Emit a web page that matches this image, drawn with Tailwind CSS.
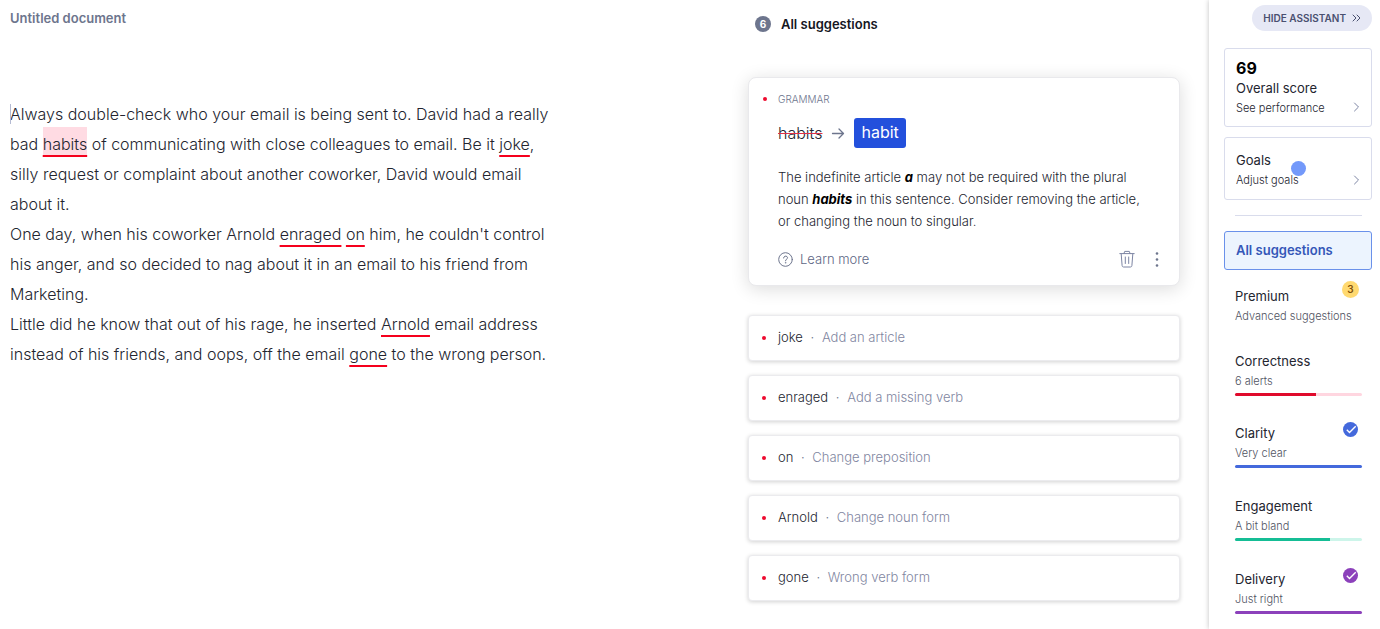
<!DOCTYPE html>
<html lang="en">
<head>
<meta charset="utf-8">
<meta name="viewport" content="width=device-width, initial-scale=1">
<title>Untitled document</title>
<script src="https://cdn.jsdelivr.net/npm/@tailwindcss/browser@4"></script>
</head>
<body class="bg-white font-['Inter',sans-serif] text-[#23252f]">
<div class="flex min-h-screen overflow-hidden">

  <!-- Editor -->
  <main class="min-w-0 flex-1 pl-[10px] pt-2">
    <h1 class="text-[13px] leading-5 font-semibold text-[#6d758d]">Untitled document</h1>
    <div contenteditable="true" role="textbox" aria-multiline="true" aria-label="Document text" spellcheck="false" class="relative mt-[71px] max-w-[550px] text-base leading-[30px] font-light outline-none">
      <span class="absolute top-[5px] left-0 h-5 w-px bg-[#b4bad2]"></span>
      <p>Always double-check who your email is being sent to. David had a really bad <span class="bg-[#ffdbe3] pt-[7px] pb-[3px] underline decoration-[#f5001d] decoration-2 underline-offset-[5px] [text-decoration-skip-ink:none]">habits</span> of communicating with close colleagues to email. Be it <span class="underline decoration-[#f5001d] decoration-2 underline-offset-[5px] [text-decoration-skip-ink:none]">joke</span>, silly request or complaint about another coworker, David would email about it.</p>
      <p>One day, when his coworker Arnold <span class="underline decoration-[#f5001d] decoration-2 underline-offset-[5px] [text-decoration-skip-ink:none]">enraged</span> <span class="underline decoration-[#f5001d] decoration-2 underline-offset-[5px] [text-decoration-skip-ink:none]">on</span> him, he couldn't control his anger, and so decided to nag about it in an email to his friend from Marketing.</p>
      <p>Little did he know that out of his rage, he inserted <span class="underline decoration-[#f5001d] decoration-2 underline-offset-[5px] [text-decoration-skip-ink:none]">Arnold</span> email address instead of his friends, and oops, off the email <span class="underline decoration-[#f5001d] decoration-2 underline-offset-[5px] [text-decoration-skip-ink:none]">gone</span> to the wrong person.</p>
    </div>
  </main>

  <!-- Suggestions -->
  <section aria-label="Suggestions" class="w-[432px] shrink-0 pt-[14px]">
    <h2 class="flex items-center gap-[10px] pl-[7px] text-[13px] leading-5 font-semibold text-[#15171f]">
      <span class="flex size-4 items-center justify-center rounded-full bg-[#6d758d] text-[10px] leading-4 font-bold text-white">6</span>
      All suggestions
    </h2>

    <article class="mt-[43px] rounded-lg border border-[#e9e9ec] bg-white pt-[15px] pr-[14px] pb-4 pl-[29px] shadow-[0_3px_18px_rgba(0,0,0,0.14)]">
      <div class="relative text-[10px] leading-3 font-light text-[#6d758d]">
        <span class="absolute top-1 -left-[15px] size-1 rounded-full bg-[#ee0a2e]"></span>
        GRAMMAR
      </div>
      <div class="mt-[13px] flex items-center gap-[9px]">
        <del class="text-base leading-[30px] font-light decoration-[#e0304a] decoration-1">habits</del>
        <svg class="size-[14px]" viewBox="0 0 14 14" fill="none" stroke="#6d758d" stroke-width="1.3" stroke-linecap="round" stroke-linejoin="round" aria-hidden="true"><path d="M1.500 7.500h11M8 3l4.500 4.500L8 12"/></svg>
        <button type="button" class="h-[30px] rounded-[3px] bg-[#2350dc] px-[7px] pb-[2px] text-base leading-6 text-white">habit</button>
      </div>
      <p class="mt-[18px] pr-4 text-[13px] leading-[22px] font-light">The indefinite article <b class="font-bold text-black italic">a</b> may not be required with the plural noun <b class="font-bold text-black italic">habits</b> in this sentence. Consider removing the article, or changing the noun to singular.</p>
      <div class="mt-[17px] flex items-center">
        <a href="#" class="flex items-center gap-[7px] text-[13px] leading-5 font-light text-[#5d6684]">
          <svg class="size-[15px]" viewBox="0 0 15 15" fill="none" stroke="#6d758d" stroke-linecap="round" aria-hidden="true"><circle cx="7.500" cy="7.500" r="6.800"/><path d="M5.600 6c0-2.600 3.900-2.500 3.900-.2 0 1.400-2 1.400-2 3"/><circle cx="7.500" cy="10.800" r=".4" fill="#6d758d" stroke-width=".5"/></svg>
          Learn more
        </a>
        <button type="button" aria-label="Dismiss" class="ml-auto">
          <svg class="h-[18px] w-4" viewBox="0 0 16 18" fill="none" stroke="#7c84a3" stroke-linecap="round" stroke-linejoin="round" aria-hidden="true"><path d="M.8 3.600h14.400M5 3.400l.7-2h4.600l.7 2M2.200 4l.9 11.500c.1 1 .6 1.500 1.500 1.500h6.800c.9 0 1.400-.5 1.500-1.500L13.800 4M6.300 7v6.500M9.700 7v6.500"/></svg>
        </button>
        <button type="button" aria-label="More options" class="ml-[14px]">
          <svg class="h-[18px] w-4" viewBox="0 0 16 18" fill="#6d758d" aria-hidden="true"><circle cx="8" cy="3.500" r="1.300"/><circle cx="8" cy="9.500" r="1.300"/><circle cx="8" cy="15.500" r="1.300"/></svg>
        </button>
      </div>
    </article>

    <div class="mt-[29px] flex flex-col gap-[14px] pb-4 text-[13px]">
      <button type="button" class="flex h-[46px] items-center rounded border border-[#ebebee] bg-white pl-[13px] text-left font-light shadow-[0_1px_4px_rgba(0,0,0,0.18)]"><span class="mr-3 size-1 rounded-full bg-[#ee0a2e]"></span>joke<span class="w-[19px] text-center text-[#6d758d]">·</span><span class="text-[#7f869f]">Add an article</span></button>
      <button type="button" class="flex h-[46px] items-center rounded border border-[#ebebee] bg-white pl-[13px] text-left font-light shadow-[0_1px_4px_rgba(0,0,0,0.18)]"><span class="mr-3 size-1 rounded-full bg-[#ee0a2e]"></span>enraged<span class="w-[19px] text-center text-[#6d758d]">·</span><span class="text-[#7f869f]">Add a missing verb</span></button>
      <button type="button" class="flex h-[46px] items-center rounded border border-[#ebebee] bg-white pl-[13px] text-left font-light shadow-[0_1px_4px_rgba(0,0,0,0.18)]"><span class="mr-3 size-1 rounded-full bg-[#ee0a2e]"></span>on<span class="w-[19px] text-center text-[#6d758d]">·</span><span class="text-[#7f869f]">Change preposition</span></button>
      <button type="button" class="flex h-[46px] items-center rounded border border-[#ebebee] bg-white pl-[13px] text-left font-light shadow-[0_1px_4px_rgba(0,0,0,0.18)]"><span class="mr-3 size-1 rounded-full bg-[#ee0a2e]"></span>Arnold<span class="w-[19px] text-center text-[#6d758d]">·</span><span class="text-[#7f869f]">Change noun form</span></button>
      <button type="button" class="flex h-[46px] items-center rounded border border-[#ebebee] bg-white pl-[13px] text-left font-light shadow-[0_1px_4px_rgba(0,0,0,0.18)]"><span class="mr-3 size-1 rounded-full bg-[#ee0a2e]"></span>gone<span class="w-[19px] text-center text-[#6d758d]">·</span><span class="text-[#7f869f]">Wrong verb form</span></button>
    </div>
  </section>

  <!-- Assistant -->
  <aside aria-label="Assistant" class="ml-[29px] flex w-[171px] shrink-0 flex-col bg-white pt-[5px] pr-2 pl-[15px] shadow-[0_0_5px_rgba(0,0,0,0.25)]">
    <button type="button" class="flex h-[26px] items-center gap-[6px] self-end rounded-full bg-[#e6e8f5] px-[11px] text-[10px] font-semibold text-[#4a5070]">HIDE ASSISTANT
      <svg class="h-2 w-[9px]" viewBox="0 0 9 8" fill="none" stroke="#4a5070" stroke-linecap="round" stroke-linejoin="round" aria-hidden="true"><path d="M1 1l3 3-3 3M5 1l3 3-3 3"/></svg>
    </button>

    <button type="button" class="mt-[17px] flex h-[79px] items-end justify-between rounded-[3px] border border-[#d9dcec] pr-[11px] pb-2 pl-[11px] text-left">
      <span class="flex flex-col">
        <span class="text-base leading-5 font-bold text-black">69</span>
        <span class="text-[13px] leading-5">Overall score</span>
        <span class="text-[11px] leading-5 font-light">See performance</span>
      </span>
      <svg class="mb-[6px] h-[10px] w-[7px]" viewBox="0 0 7 10" fill="none" stroke="#7c84a3" stroke-linecap="round" stroke-linejoin="round" aria-hidden="true"><path d="M1.500 1L5.500 5l-4 4"/></svg>
    </button>

    <button type="button" class="relative mt-[10px] flex h-[63px] items-end justify-between rounded-[3px] border border-[#d9dcec] pr-[11px] pb-[9px] pl-[11px] text-left">
      <span class="flex flex-col">
        <span class="text-[13px] leading-5">Goals</span>
        <span class="text-[11px] leading-5 font-light">Adjust goals</span>
      </span>
      <svg class="mb-[5px] h-[10px] w-[7px]" viewBox="0 0 7 10" fill="none" stroke="#7c84a3" stroke-linecap="round" stroke-linejoin="round" aria-hidden="true"><path d="M1.500 1L5.500 5l-4 4"/></svg>
      <span class="absolute top-[23px] left-[66px] size-[15px] rounded-full bg-[#7399fa]"></span>
    </button>

    <hr class="mr-[10px] ml-[11px] mt-[15px] border-[#d9dcec]">

    <button type="button" class="mt-[15px] h-[39px] rounded-[3px] border border-[#6a91ea] bg-[#ecf4fe] pl-[11px] text-left text-[13px] font-semibold text-[#3457b8]">All suggestions</button>

    <div class="mt-4 flex flex-col pr-[10px] pl-[11px]">
      <button type="button" class="relative flex h-[65px] flex-col text-left">
        <span class="text-[13px] leading-5">Premium</span>
        <span class="text-[11px] leading-5 font-light text-[#50535f]">Advanced suggestions</span>
        <span class="absolute -top-[5px] right-[3px] size-[17px] rounded-full bg-[#ffd970] text-center text-[10px] leading-[17px] font-semibold text-[#80500a]">3</span>
      </button>
      <button type="button" class="flex h-[72px] flex-col text-left">
        <span class="text-[13px] leading-5">Correctness</span>
        <span class="text-[11px] leading-5 font-light text-[#50535f]">6 alerts</span>
        <span class="mt-[2px] h-[3px] w-full rounded-full bg-[#ffd6e0]"><span class="block h-full rounded-l-full bg-[#e00a2c]" style="width:64%"></span></span>
      </button>
      <button type="button" class="relative flex h-[73px] flex-col text-left">
        <span class="text-[13px] leading-5">Clarity</span>
        <span class="text-[11px] leading-5 font-light text-[#50535f]">Very clear</span>
        <span class="mt-[2px] h-[3px] w-full rounded-full bg-[#4469dc]"></span>
        <svg class="absolute -top-[1px] right-1 size-[15px]" viewBox="0 0 15 15" fill="none" aria-hidden="true"><circle cx="7.500" cy="7.500" r="7.500" fill="#4469dc"/><path d="M3.800 7.800l2.700 2.600 6.200-6.200" stroke="#fff" stroke-width="1.400"/></svg>
      </button>
      <button type="button" class="flex h-[73px] flex-col text-left">
        <span class="text-[13px] leading-5">Engagement</span>
        <span class="text-[11px] leading-5 font-light text-[#50535f]">A bit bland</span>
        <span class="mt-[2px] h-[3px] w-full rounded-full bg-[#cdf5ea]"><span class="block h-full rounded-l-full bg-[#15bd95]" style="width:75%"></span></span>
      </button>
      <button type="button" class="relative flex flex-col text-left">
        <span class="text-[13px] leading-5">Delivery</span>
        <span class="text-[11px] leading-5 font-light text-[#50535f]">Just right</span>
        <span class="mt-[2px] h-[3px] w-full rounded-full bg-[#8c41bb]"></span>
        <svg class="absolute -top-[1px] right-1 size-[15px]" viewBox="0 0 15 15" fill="none" aria-hidden="true"><circle cx="7.500" cy="7.500" r="7.500" fill="#8c41bb"/><path d="M3.800 7.800l2.700 2.600 6.200-6.200" stroke="#fff" stroke-width="1.400"/></svg>
      </button>
    </div>
  </aside>
</div>
</body>
</html>
